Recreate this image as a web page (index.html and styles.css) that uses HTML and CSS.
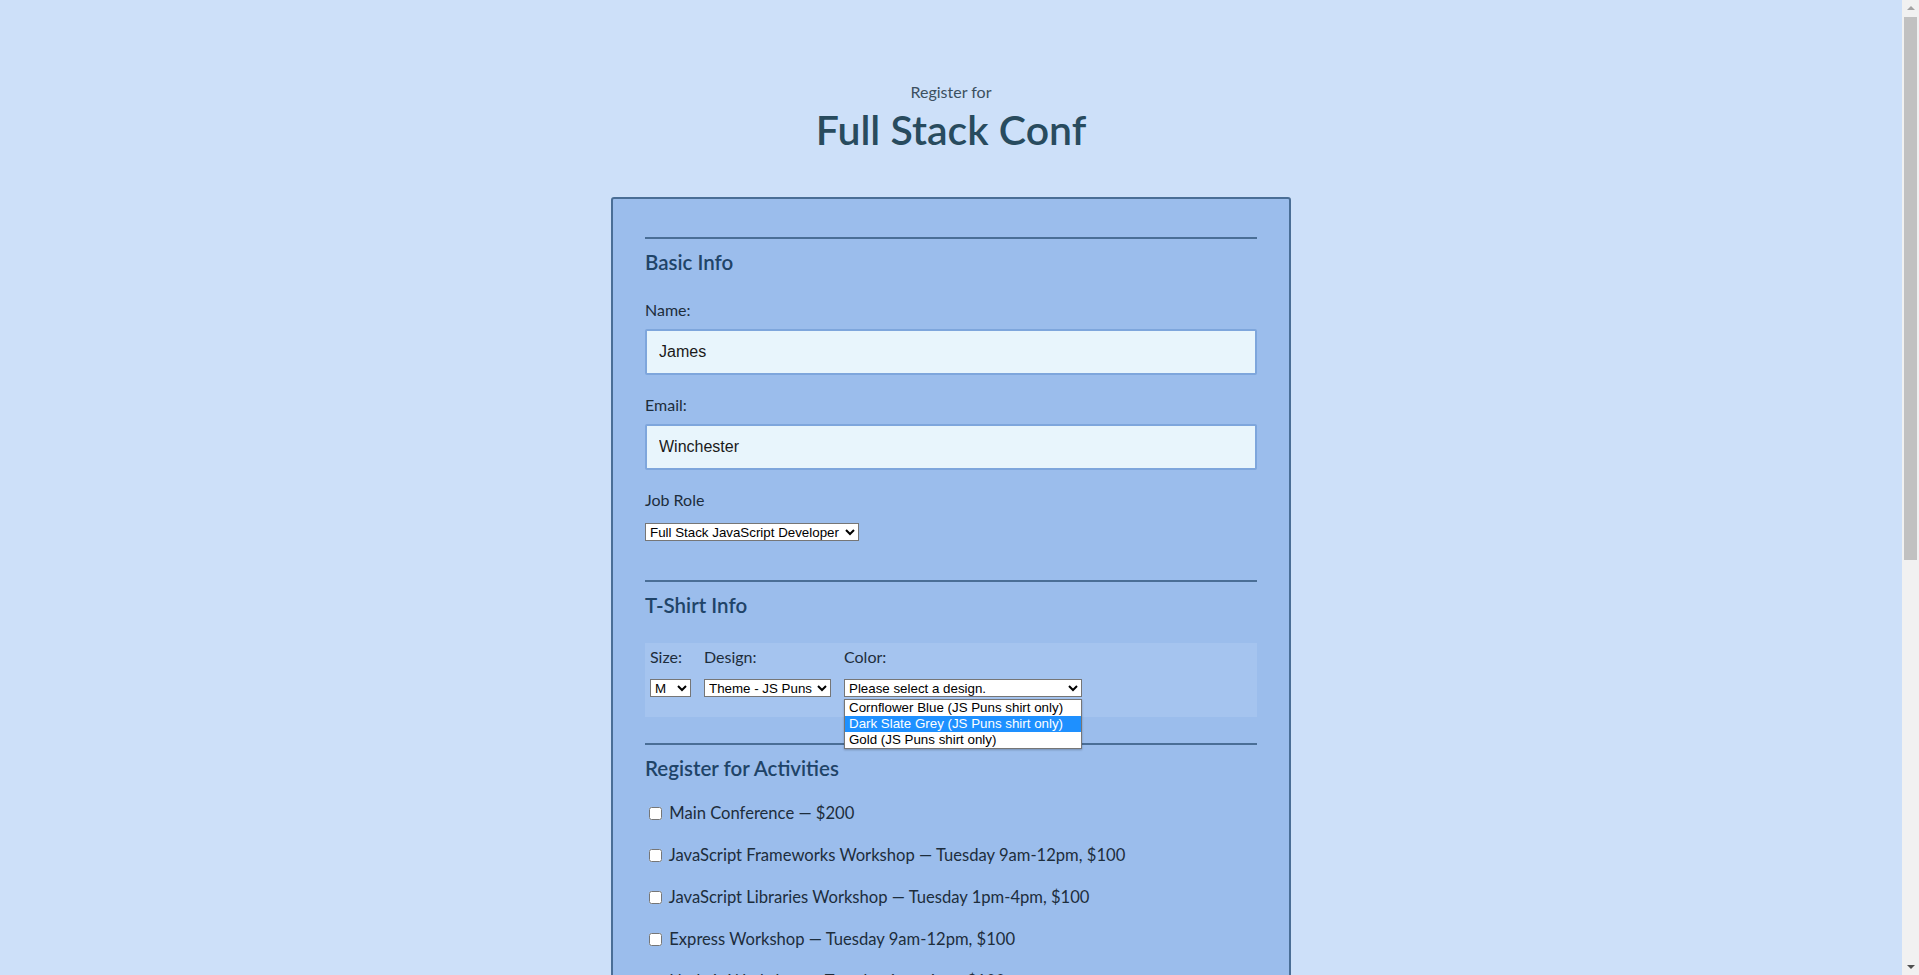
FILE: index.html
```html
<!DOCTYPE html>
<html lang="en">
<head>
<meta charset="utf-8">
<title>Full Stack Conf</title>
<link rel="stylesheet" href="styles.css">
</head>
<body>
<header class="page-header">
  <span class="pre-title">Register for</span>
  <h1 class="title">Full Stack Conf</h1>
</header>

<form class="reg-form">
  <section class="section">
    <h2 class="section-title">Basic Info</h2>
    <label class="field-label" for="name">Name:</label>
    <input class="text-input" type="text" id="name" value="James">
    <label class="field-label" for="mail">Email:</label>
    <input class="text-input" type="text" id="mail" value="Winchester">
    <label class="field-label label-job" for="title">Job Role</label>
    <select class="job-select" id="title">
      <option>Full Stack JavaScript Developer</option>
    </select>
  </section>

  <section class="section">
    <h2 class="section-title">T-Shirt Info</h2>
    <div class="shirt-box">
      <div class="shirt-col">
        <label class="field-label" for="size">Size:</label>
        <select class="size-select" id="size"><option>M</option></select>
      </div>
      <div class="shirt-col">
        <label class="field-label" for="design">Design:</label>
        <select class="design-select" id="design"><option>Theme - JS Puns</option></select>
      </div>
      <div class="shirt-col color-col">
        <label class="field-label" for="color">Color:</label>
        <select class="color-select" id="color"><option>Please select a design.</option></select>
        <ul class="dropdown">
          <li class="dropdown-item">Cornflower Blue (JS Puns shirt only)</li>
          <li class="dropdown-item is-active">Dark Slate Grey (JS Puns shirt only)</li>
          <li class="dropdown-item">Gold (JS Puns shirt only)</li>
        </ul>
      </div>
    </div>
  </section>

  <section class="section">
    <h2 class="section-title">Register for Activities</h2>
    <ul class="activities">
      <li class="activity"><label><input type="checkbox"> Main Conference — $200</label></li>
      <li class="activity"><label><input type="checkbox"> JavaScript Frameworks Workshop — Tuesday 9am-12pm, $100</label></li>
      <li class="activity"><label><input type="checkbox"> JavaScript Libraries Workshop — Tuesday 1pm-4pm, $100</label></li>
      <li class="activity"><label><input type="checkbox"> Express Workshop — Tuesday 9am-12pm, $100</label></li>
      <li class="activity"><label><input type="checkbox"> Node.js Workshop — Tuesday 1pm-4pm, $100</label></li>
      <li class="activity"><label><input type="checkbox"> Build tools Workshop — Wednesday 9am-12pm, $100</label></li>
      <li class="activity"><label><input type="checkbox"> npm Workshop — Wednesday 1pm-4pm, $100</label></li>
    </ul>
  </section>

  <section class="section">
    <h2 class="section-title">Payment Info</h2>
    <label class="field-label" for="payment">I'm going to pay with:</label>
    <select class="job-select" id="payment"><option>Credit Card</option></select>
  </section>

  <button class="submit" type="submit">Register</button>
</form>

<div class="scrollbar" aria-hidden="true">
  <span class="sb-arrow sb-up"></span>
  <span class="sb-thumb"></span>
  <span class="sb-arrow sb-down"></span>
</div>
</body>
</html>
```

FILE: styles.css
```css
* {
  box-sizing: border-box;
}

body {
  margin: 0 17px 0 0;
  background: #cde0f9;
  font-family: Lato, "Noto Sans", sans-serif;
  color: #1d2d3c;
  padding-bottom: 60px;
}

.page-header {
  display: flex;
  flex-direction: column;
  align-items: center;
  padding-top: 82px;
}

.pre-title {
  font-size: 16px;
  line-height: 20px;
  color: #3c5060;
}

.title {
  margin: 4px 0 0;
  font-size: 41px;
  line-height: 48px;
  font-weight: 600;
  color: #284b5e;
}

.reg-form {
  width: 680px;
  margin: 43px auto 0;
  background: #9bbdec;
  border: 2px solid #4a6e96;
  border-radius: 3px;
  padding: 38px 32px 40px;
}

.section {
  border-top: 2px solid #4a6e96;
  padding-bottom: 39px;
  display: flex;
  flex-direction: column;
  align-items: flex-start;
}

.section-title {
  margin: 11px 0 26px;
  font-size: 20.5px;
  line-height: 24px;
  font-weight: 600;
  color: #1f4468;
}

.field-label {
  font-size: 16px;
  line-height: 20px;
  color: #1d2d3c;
  margin-bottom: 9px;
}

.label-job {
  margin-bottom: 13px;
}

.text-input {
  width: 100%;
  height: 46px;
  margin: 0 0 20px;
  padding: 0 12px;
  background: #e8f5fc;
  border: 2px solid #7ea6dc;
  border-radius: 2px;
  font-family: "Liberation Sans", Arial, sans-serif;
  font-size: 16px;
  color: #1a1a1a;
}

.job-select {
  width: 214px;
  height: 18px;
  font-family: "Liberation Sans", Arial, sans-serif;
  font-size: 13.33px;
  background: #fff;
  color: #000;
  border: 1px solid #767676;
  border-radius: 0;
  padding: 0;
}

.shirt-box {
  position: relative;
  align-self: stretch;
  display: flex;
  gap: 13px;
  background: #a5c4ef;
  padding: 4px 5px 20px;
  margin-bottom: -13px;
}

.shirt-col {
  display: flex;
  flex-direction: column;
  align-items: flex-start;
}

.shirt-col .field-label {
  margin-bottom: 12px;
}

.size-select,
.design-select,
.color-select {
  height: 18px;
  font-family: "Liberation Sans", Arial, sans-serif;
  font-size: 13.33px;
  background: #fff;
  color: #000;
  border: 1px solid #767676;
  border-radius: 0;
  padding: 0;
}

.size-select {
  width: 41px;
}

.design-select {
  width: 127px;
}

.color-select {
  width: 238px;
}

.color-col {
  position: relative;
}

.dropdown {
  position: absolute;
  left: 0;
  top: 52px;
  width: 238px;
  margin: 0;
  padding: 0;
  list-style: none;
  background: #fff;
  border: 1px solid #767676;
  box-shadow: 0 1px 2px rgba(0, 0, 0, 0.25);
  font-family: "Liberation Sans", Arial, sans-serif;
  font-size: 13.33px;
  color: #000;
  z-index: 2;
}

.dropdown-item {
  height: 16px;
  line-height: 16px;
  padding-left: 4px;
  white-space: nowrap;
}

.dropdown-item.is-active {
  background: #1e90ff;
  color: #fff;
}

.activities {
  list-style: none;
  margin: -3px 0 0;
  padding: 0;
  display: flex;
  flex-direction: column;
  gap: 22px;
}

.activity {
  font-size: 16.6px;
  line-height: 20px;
  color: #1d2d3c;
  white-space: nowrap;
}

.activity input {
  margin: 3px 3px 3px 4px;
  vertical-align: -1px;
}

.submit {
  font-family: Lato, sans-serif;
  font-size: 16px;
  padding: 12px 24px;
  background: #22627e;
  color: #fff;
  border: 0;
  border-radius: 4px;
}

.scrollbar {
  position: fixed;
  top: 0;
  right: 0;
  width: 17px;
  height: 100vh;
  background: #f1f1f1;
  display: flex;
  flex-direction: column;
  align-items: center;
  z-index: 10;
}

.sb-arrow {
  width: 17px;
  height: 17px;
  flex: none;
  position: relative;
}

.sb-arrow::after {
  content: "";
  position: absolute;
  left: 5px;
  width: 0;
  height: 0;
  border-left: 4px solid transparent;
  border-right: 4px solid transparent;
}

.sb-up::after {
  top: 6px;
  border-bottom: 4px solid #a3a3a3;
}

.sb-down::after {
  top: 7px;
  border-top: 4px solid #505050;
}

.sb-thumb {
  width: 13px;
  height: 543px;
  background: #c1c1c1;
  flex: none;
}

.sb-down {
  margin-top: auto;
}
```
